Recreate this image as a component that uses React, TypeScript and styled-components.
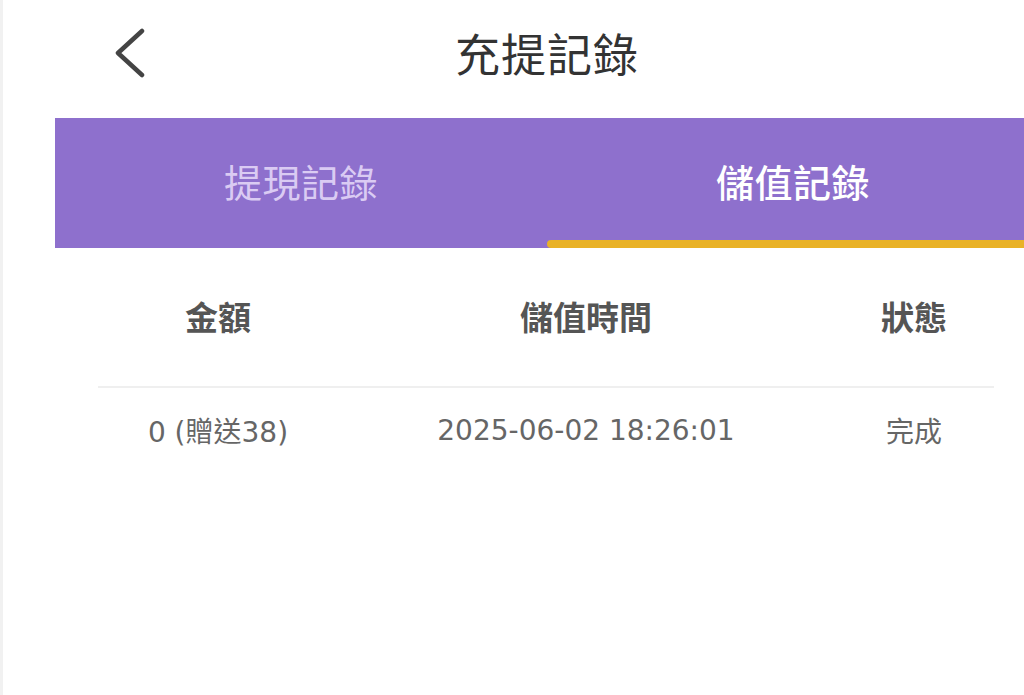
import * as React from 'react';
import styled, { createGlobalStyle } from 'styled-components';

const GlobalStyle = createGlobalStyle`
  html, body {
    margin: 0;
    padding: 0;
    background: #ffffff;
    overflow: hidden;
  }
  body {
    font-family: 'Noto Sans CJK TC', 'Noto Sans', sans-serif;
  }
`;

const Screen = styled.div`
  width: 1024px;
  height: 695px;
  overflow: hidden;
  border-left: 3px solid #f1f1f1;
  box-sizing: border-box;
`;

const Frame = styled.div`
  margin-left: 52px;
  width: 984px;
`;

const Header = styled.div`
  height: 118px;
  display: flex;
  align-items: center;
  justify-content: center;
  position: relative;
  padding-bottom: 14px;
  box-sizing: border-box;
`;

const BackButton = styled.button`
  position: absolute;
  left: 58px;
  top: 26px;
  width: 36px;
  height: 52px;
  padding: 0;
  border: 0;
  background: transparent;
  cursor: pointer;
`;

const Title = styled.h1`
  margin: 0;
  font-size: 45px;
  font-weight: 400;
  color: #333333;
  letter-spacing: 1px;
`;

const TabBar = styled.div`
  height: 130px;
  background: #8e70cd;
  display: grid;
  grid-template-columns: 1fr 1fr;
`;

const Tab = styled.div<{ active: boolean }>`
  position: relative;
  display: flex;
  align-items: center;
  justify-content: center;
  padding-bottom: 6px;
  font-size: 38px;
  font-weight: ${({ active }) => (active ? 500 : 400)};
  color: ${({ active }) => (active ? '#ffffff' : '#dacbf3')};
  letter-spacing: 0.5px;
  &::after {
    content: '';
    display: ${({ active }) => (active ? 'block' : 'none')};
    position: absolute;
    left: 0;
    right: 0;
    bottom: 0;
    height: 8px;
    border-radius: 4px 0 0 4px;
    background: #e9b227;
  }
`;

const Table = styled.div`
  margin: 0 45px 0 43px;
`;

const Row = styled.div<{ head?: boolean }>`
  display: grid;
  grid-template-columns: 240px 496px 160px;
  align-items: center;
  height: ${({ head }) => (head ? '140px' : '88px')};
  padding-bottom: ${({ head }) => (head ? '3px' : '4px')};
  border-bottom: ${({ head }) => (head ? '2px solid #efefef' : 'none')};
  box-sizing: border-box;
`;

const Cell = styled.div<{ head?: boolean }>`
  text-align: center;
  font-family: ${({ head }) =>
    head ? "'Noto Sans CJK TC', sans-serif" : "'DejaVu Sans', 'Noto Sans CJK TC', sans-serif"};
  font-size: ${({ head }) => (head ? '33px' : '28px')};
  font-weight: ${({ head }) => (head ? 700 : 400)};
  color: ${({ head }) => (head ? '#555555' : '#666666')};
  white-space: nowrap;
`;

const records = [{ amount: '0 (贈送38)', time: '2025-06-02 18:26:01', status: '完成' }];

export default function App() {
  const [tab, setTab] = React.useState(1);
  return (
    <Screen>
      <GlobalStyle />
      <Frame>
        <Header>
          <BackButton aria-label="back">
            <svg width="36" height="52" viewBox="0 0 36 52">
              <polyline
                points="29,5 5,27 29,49"
                fill="none"
                stroke="#444444"
                strokeWidth="4.5"
                strokeLinecap="round"
                strokeLinejoin="round"
              />
            </svg>
          </BackButton>
          <Title>充提記錄</Title>
        </Header>
        <TabBar>
          <Tab active={tab === 0} onClick={() => setTab(0)}>提現記錄</Tab>
          <Tab active={tab === 1} onClick={() => setTab(1)}>儲值記錄</Tab>
        </TabBar>
        <Table>
          <Row head>
            <Cell head>金額</Cell>
            <Cell head>儲值時間</Cell>
            <Cell head>狀態</Cell>
          </Row>
          {records.map((r) => (
            <Row key={r.time}>
              <Cell>{r.amount}</Cell>
              <Cell>{r.time}</Cell>
              <Cell>{r.status}</Cell>
            </Row>
          ))}
        </Table>
      </Frame>
    </Screen>
  );
}
